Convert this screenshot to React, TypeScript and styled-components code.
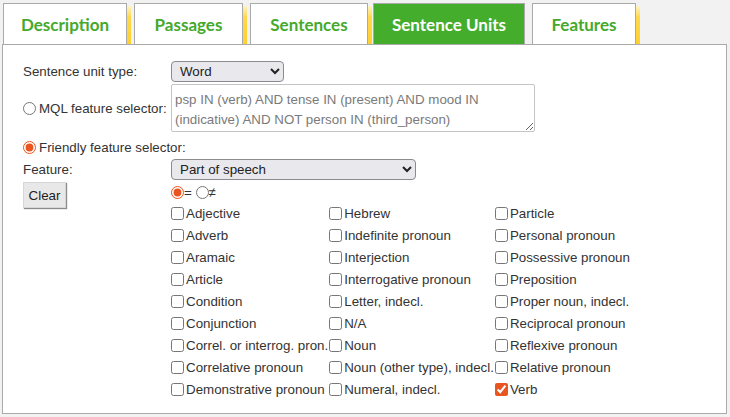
import React from "react";
import styled, { createGlobalStyle } from "styled-components";

const GlobalStyle = createGlobalStyle`
  html, body {
    margin: 0;
    background: #f2f2f2;
  }
  body {
    font-family: "Liberation Sans", Arial, sans-serif;
    font-size: 13.333px;
    color: #333;
  }
`;

const Page = styled.div`
  padding: 3px 0 0 2px;
  width: 725px;
`;

const TabBar = styled.div`
  display: flex;
  align-items: flex-end;
  padding-left: 1px;
`;

const Tab = styled.div<{ $active?: boolean; $width: number; $gap: number }>`
  position: relative;
  box-sizing: border-box;
  width: ${(p) => p.$width}px;
  height: 41px;
  padding-top: 1px;
  margin-right: ${(p) => p.$gap}px;
  display: flex;
  align-items: center;
  justify-content: center;
  border: 1px solid #aaa;
  border-bottom: none;
  background: ${(p) => (p.$active ? "#44ad2b" : "#fff")};
  color: ${(p) => (p.$active ? "#fff" : "#45a92c")};
  font-family: Lato, "Open Sans", sans-serif;
  font-weight: 700;
  font-size: 17px;
  white-space: nowrap;

  &::after {
    content: "";
    display: ${(p) => (p.$active ? "none" : "block")};
    position: absolute;
    top: 2px;
    right: -5px;
    width: 4px;
    bottom: 0;
    background: linear-gradient(#fff3c4, #ffd84a 30%, #ffd030);
  }
`;

const Panel = styled.div`
  box-sizing: border-box;
  height: 370px;
  border: 1px solid #aaa;
  background: #fff;
  padding: 16px 20px;
`;

const Row = styled.div<{ $top?: number; $align?: string }>`
  display: flex;
  align-items: ${(p) => p.$align || "center"};
  margin-top: ${(p) => p.$top || 0}px;
`;

const LabelCell = styled.div`
  width: 148px;
  flex: none;
  display: flex;
  align-items: center;
  white-space: nowrap;
`;

const FullLine = styled.label`
  display: flex;
  align-items: center;
  height: 22px;
  white-space: nowrap;
`;

const Radio = styled.input.attrs({ type: "radio" })<{ $gap?: number }>`
  width: 13px;
  height: 13px;
  margin: 0 ${(p) => p.$gap ?? 3}px 0 0;
  accent-color: #e95420;
`;

const Select = styled.select<{ $width: number }>`
  box-sizing: border-box;
  width: ${(p) => p.$width}px;
  height: 21px;
  padding: 0 4px;
  border: 1px solid #8a8a8f;
  border-radius: 4px;
  background-color: #e9e9ed;
  font-family: "Liberation Sans", Arial, sans-serif;
  font-size: 13.333px;
  color: #222;
`;

const Query = styled.textarea`
  box-sizing: border-box;
  width: 364px;
  height: 48px;
  padding: 5px 3px 0;
  border: 1px solid #c4c4c4;
  border-radius: 2px;
  font-family: "Liberation Sans", Arial, sans-serif;
  font-size: 13.333px;
  line-height: 20px;
  color: #7a7a7a;
  outline: none;
`;

const ClearButton = styled.button`
  box-sizing: border-box;
  width: 43px;
  height: 26px;
  padding: 0;
  border: 1px solid #d6d6d6;
  border-radius: 0;
  background: #e8e8e8;
  box-shadow: 1px 1px 1px #8a8a8a;
  font-family: "Liberation Sans", Arial, sans-serif;
  font-size: 13.333px;
  color: #222;
`;

const ValueColumn = styled.div`
  display: flex;
  flex-direction: column;
`;

const OperatorLine = styled.div`
  display: flex;
  align-items: center;
  height: 20px;
  white-space: pre;
`;

const CheckGrid = styled.div`
  display: grid;
  grid-auto-flow: column;
  grid-template-rows: repeat(9, 22px);
  column-gap: 1px;
  justify-content: start;
`;

const CheckItem = styled.label`
  display: flex;
  align-items: center;
  white-space: nowrap;
`;

const Check = styled.input.attrs({ type: "checkbox" })`
  width: 13px;
  height: 13px;
  margin: 0 2px 0 0;
  accent-color: #e95420;
`;

const tabs = [
  { name: "Description", width: 124, gap: 7 },
  { name: "Passages", width: 109, gap: 7 },
  { name: "Sentences", width: 118, gap: 5 },
  { name: "Sentence Units", width: 152, gap: 7 },
  { name: "Features", width: 104, gap: 0 },
];

const partsOfSpeech = [
  "Adjective",
  "Adverb",
  "Aramaic",
  "Article",
  "Condition",
  "Conjunction",
  "Correl. or interrog. pron.",
  "Correlative pronoun",
  "Demonstrative pronoun",
  "Hebrew",
  "Indefinite pronoun",
  "Interjection",
  "Interrogative pronoun",
  "Letter, indecl.",
  "N/A",
  "Noun",
  "Noun (other type), indecl.",
  "Numeral, indecl.",
  "Particle",
  "Personal pronoun",
  "Possessive pronoun",
  "Preposition",
  "Proper noun, indecl.",
  "Reciprocal pronoun",
  "Reflexive pronoun",
  "Relative pronoun",
  "Verb",
];

const QUERY =
  "psp IN (verb) AND tense IN (present) AND mood IN (indicative) AND NOT person IN (third_person)";

export default function App() {
  return (
    <Page>
      <GlobalStyle />
      <TabBar>
        {tabs.map((t) => (
          <Tab
            key={t.name}
            $active={t.name === "Sentence Units"}
            $width={t.width}
            $gap={t.gap}
          >
            {t.name}
          </Tab>
        ))}
      </TabBar>
      <Panel>
        <Row>
          <LabelCell>Sentence unit type:</LabelCell>
          <Select $width={113} defaultValue="word">
            <option value="word">Word</option>
            <option value="phrase">Phrase</option>
            <option value="clause">Clause</option>
          </Select>
        </Row>
        <Row $top={2}>
          <LabelCell as="label">
            <Radio name="selector" />
            MQL feature selector:
          </LabelCell>
          <Query readOnly value={QUERY} />
        </Row>
        <Row $top={4}>
          <FullLine>
            <Radio name="selector" defaultChecked />
            Friendly feature selector:
          </FullLine>
        </Row>
        <Row $top={1}>
          <LabelCell>Feature:</LabelCell>
          <Select $width={245} defaultValue="psp">
            <option value="psp">Part of speech</option>
            <option value="tense">Tense</option>
            <option value="mood">Mood</option>
          </Select>
        </Row>
        <Row $top={2} $align="flex-start">
          <LabelCell>
            <ClearButton>Clear</ClearButton>
          </LabelCell>
          <ValueColumn>
            <OperatorLine>
              <Radio name="op" $gap={0} defaultChecked />
              {"= "}
              <Radio name="op" $gap={0} />
              {"≠"}
            </OperatorLine>
            <CheckGrid>
              {partsOfSpeech.map((p) => (
                <CheckItem key={p}>
                  <Check defaultChecked={p === "Verb"} />
                  {p}
                </CheckItem>
              ))}
            </CheckGrid>
          </ValueColumn>
        </Row>
      </Panel>
    </Page>
  );
}
